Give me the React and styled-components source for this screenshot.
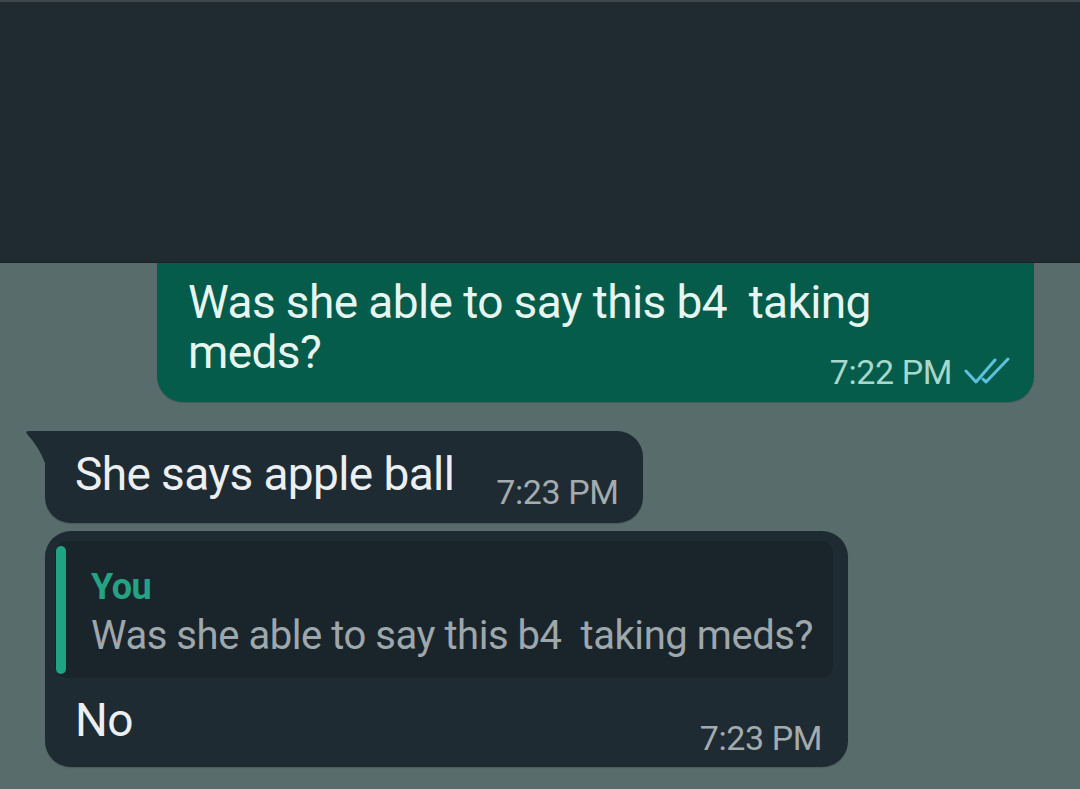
import React from 'react';
import styled, { createGlobalStyle } from 'styled-components';

const GlobalStyle = createGlobalStyle`
    * { box-sizing: border-box; }
    html, body {
        margin: 0;
        padding: 0;
        background: #586c6c;
        font-family: Roboto, "Liberation Sans", sans-serif;
    }
`

const messages = [
    { id: 1, text: 'She says apple ball', time: '7:23 PM', tail: true },
]

const DoubleTick = () => (
    <svg width="46" height="28" viewBox="0 0 46 28" fill="none">
        <path d="M2 14 L12 25 L31 3" stroke="#5cc1dc" strokeWidth="3" strokeLinecap="round" strokeLinejoin="round" />
        <path d="M19 22 L22 25 L44 2" stroke="#5cc1dc" strokeWidth="3" strokeLinecap="round" strokeLinejoin="round" />
    </svg>
)

const Tail = () => (
    <TailSvg width="22" height="32" viewBox="0 0 22 32">
        <path d="M22 0 L4 0 Q0 0 2 3 Q14 16 20 32 L22 32 Z" fill="#1f2b32" />
    </TailSvg>
)

const App = () => {
    return (
        <>
            <GlobalStyle />
            <Page>
                <Header />
                <Chat>
                    <Outgoing>
                        <BodyText>{'Was she able to say this b4  taking\nmeds?'}</BodyText>
                        <OutMeta>
                            <Time out>7:22 PM</Time>
                            <DoubleTick />
                        </OutMeta>
                    </Outgoing>

                    {messages.map(m => (
                        <Incoming key={m.id} tail={m.tail ? 1 : 0}>
                            {m.tail && <Tail />}
                            <InRow>
                                <BodyText light>{m.text}</BodyText>
                                <Time>{m.time}</Time>
                            </InRow>
                        </Incoming>
                    ))}

                    <ReplyBubble>
                        <Quote>
                            <QuoteBar />
                            <QuoteContent>
                                <QuoteAuthor>You</QuoteAuthor>
                                <QuoteText>{'Was she able to say this b4  taking meds?'}</QuoteText>
                            </QuoteContent>
                        </Quote>
                        <ReplyRow>
                            <BodyText light>No</BodyText>
                            <Time>7:23 PM</Time>
                        </ReplyRow>
                    </ReplyBubble>
                </Chat>
            </Page>
        </>
    );
}

const Page = styled.div`
    width: 1080px;
    height: 789px;
    overflow: hidden;
    display: flex;
    flex-direction: column;
    background: #586c6c;
`
const Header = styled.div`
    height: 263px;
    flex-shrink: 0;
    background: #1f2a31;
    border-top: 2px solid #3f484d;
    border-bottom: 1px solid #1a2228;
`
const Chat = styled.div`
    display: flex;
    flex-direction: column;
    align-items: flex-start;
`
const Outgoing = styled.div`
    width: 877px;
    margin-left: 157px;
    background: #065c4b;
    border-radius: 0 0 26px 26px;
    padding: 14px 24px 13px 31px;
    box-shadow: 0 1px 1px rgba(0, 0, 0, 0.15);
`
const BodyText = styled.div`
    white-space: pre-wrap;
    font-size: 46px;
    letter-spacing: -0.6px;
    line-height: 50px;
    color: ${p => p.light ? '#eceff1' : '#e6f5ef'};
`
const OutMeta = styled.div`
    display: flex;
    justify-content: flex-end;
    align-items: center;
    gap: 12px;
    margin-top: -22px;
    height: 34px;
    svg { margin-top: -2px; }
`
const Time = styled.span`
    font-size: 34px;
    letter-spacing: -0.4px;
    line-height: 34px;
    white-space: nowrap;
    color: ${p => p.out ? '#a6d8cb' : '#a3abaf'};
`
const Incoming = styled.div`
    position: relative;
    margin: 29px 0 0 45px;
    background: #1f2b32;
    border-radius: ${p => p.tail ? '0 26px 26px 26px' : '26px'};
    padding: 18px 24px 14px 30px;
    box-shadow: 0 1px 1px rgba(0, 0, 0, 0.15);
`
const TailSvg = styled.svg`
    position: absolute;
    left: -20px;
    top: 0;
`
const InRow = styled.div`
    display: flex;
    align-items: flex-end;
    gap: 42px;
    ${BodyText} { margin-bottom: 10px; }
`
const ReplyBubble = styled.div`
    width: 803px;
    margin: 8px 0 0 45px;
    background: #1f2b32;
    border-radius: 26px;
    padding: 10px 15px 12px 10px;
    box-shadow: 0 1px 1px rgba(0, 0, 0, 0.15);
`
const Quote = styled.div`
    display: flex;
    background: #1a252b;
    border-radius: 12px;
    padding: 5px 0 4px 1px;
`
const QuoteBar = styled.div`
    width: 10px;
    flex-shrink: 0;
    border-radius: 5px;
    background: #1ea383;
`
const QuoteContent = styled.div`
    padding: 21px 0 15px 25px;
`
const QuoteAuthor = styled.div`
    font-size: 36px;
    font-weight: 700;
    line-height: 40px;
    letter-spacing: -0.5px;
    color: #24a384;
`
const QuoteText = styled.div`
    white-space: pre-wrap;
    margin-top: 6px;
    font-size: 40px;
    line-height: 46px;
    letter-spacing: -0.45px;
    color: #9ea7ac;
`
const ReplyRow = styled.div`
    display: flex;
    justify-content: space-between;
    align-items: flex-end;
    padding: 17px 11px 0 20px;
    ${BodyText} { margin-bottom: 10px; }
`

export default App;
